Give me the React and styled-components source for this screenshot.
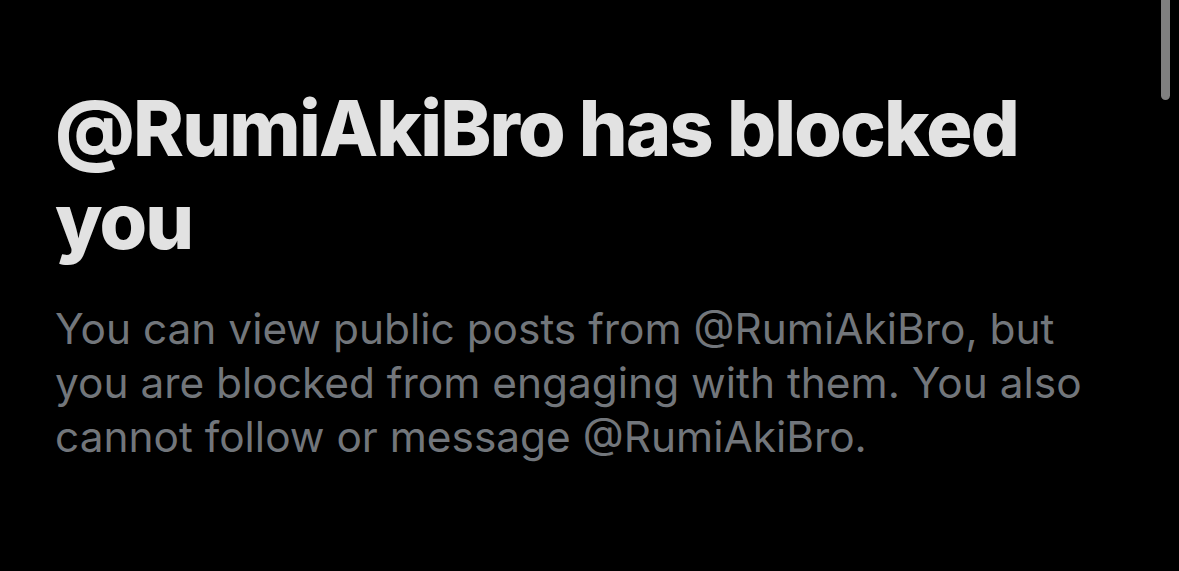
import styled, { createGlobalStyle } from "styled-components";

const HANDLE = "RumiAkiBro";

const GlobalStyle = createGlobalStyle`
  html, body {
    margin: 0;
    padding: 0;
    background: #000;
  }
  body {
    font-family: Inter, "Liberation Sans", Arial, sans-serif;
    -webkit-font-smoothing: antialiased;
  }
`;

const Screen = styled.div`
  position: relative;
  width: 1179px;
  height: 571px;
  overflow: hidden;
  background: #000;
`;

const Content = styled.div`
  padding: 82px 0 0 55px;
  width: 1045px;
`;

const Title = styled.h1`
  margin: 0;
  color: #e2e2e2;
  font-size: 77px;
  line-height: 93px;
  font-weight: 800;
  letter-spacing: -1.8px;
`;

const Body = styled.p`
  margin: 34px 0 0 0;
  color: #72767b;
  font-size: 42.4px;
  line-height: 54px;
  font-weight: 400;
`;

// scroll indicator sits over the page edge
const ScrollThumb = styled.div`
  position: absolute;
  top: -6px;
  right: 9px;
  width: 9px;
  height: 106px;
  border-radius: 5px;
  background: #7f7f7f;
`;

export default function App() {
  return (
    <>
      <GlobalStyle />
      <Screen>
        <Content>
          <Title>@{HANDLE} has blocked you</Title>
          <Body>
            You can view public posts from @{HANDLE}, but you are blocked from
            engaging with them. You also cannot follow or message @{HANDLE}.
          </Body>
        </Content>
        <ScrollThumb />
      </Screen>
    </>
  );
}
